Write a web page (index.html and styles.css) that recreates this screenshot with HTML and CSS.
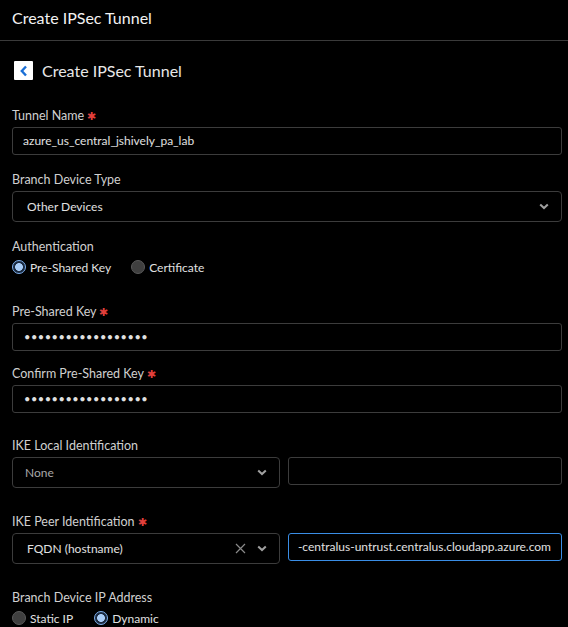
FILE: index.html
```html
<!DOCTYPE html>
<html>
<head>
<meta charset="utf-8">
<link rel="stylesheet" href="styles.css">
</head>
<body>
<div class="header">Create IPSec Tunnel</div>
<div class="titlebar">
  <span class="back"><svg width="10" height="12" viewBox="0 0 10 12"><path d="M7 1.5 L2.8 6 L7 10.5" fill="none" stroke="#1a6fd6" stroke-width="2.4"/></svg></span>
  <span class="title">Create IPSec Tunnel</span>
</div>
<div class="form">
  <div class="field f-tunnel">
    <div class="label">Tunnel Name <span class="req">✱</span></div>
    <div class="input">azure_us_central_jshively_pa_lab</div>
  </div>
  <div class="field f-gap1">
    <div class="label">Branch Device Type</div>
    <div class="select"><span class="val">Other Devices</span><span class="chev"><svg width="10" height="7" viewBox="0 0 10 7"><path d="M1.2 1.4 L5 5 L8.8 1.4" fill="none" stroke="#a0a0a0" stroke-width="2"/></svg></span></div>
  </div>
  <div class="field f-gap2">
    <div class="label">Authentication</div>
    <div class="radios">
      <span class="radio on"></span><span class="rtext">Pre-Shared Key</span>
      <span class="radio off r2"></span><span class="rtext">Certificate</span>
    </div>
  </div>
  <div class="field f-psk">
    <div class="label">Pre-Shared Key <span class="req">✱</span></div>
    <div class="input dots">••••••••••••••••••</div>
  </div>
  <div class="field f-confirm">
    <div class="label">Confirm Pre-Shared Key <span class="req">✱</span></div>
    <div class="input dots">••••••••••••••••••</div>
  </div>
  <div class="field f-local">
    <div class="label">IKE Local Identification</div>
    <div class="pair">
      <div class="select"><span class="val dim">None</span><span class="chev"><svg width="10" height="7" viewBox="0 0 10 7"><path d="M1.2 1.4 L5 5 L8.8 1.4" fill="none" stroke="#a0a0a0" stroke-width="2"/></svg></span></div>
      <div class="input"></div>
    </div>
  </div>
  <div class="field f-peer">
    <div class="label">IKE Peer Identification <span class="req">✱</span></div>
    <div class="pair">
      <div class="select"><span class="val">FQDN (hostname)</span><span class="clear"><svg width="11" height="11" viewBox="0 0 11 11"><path d="M1 1 L10 10 M10 1 L1 10" stroke="#8a8a8a" stroke-width="1.2"/></svg></span><span class="chev"><svg width="10" height="7" viewBox="0 0 10 7"><path d="M1.2 1.4 L5 5 L8.8 1.4" fill="none" stroke="#a0a0a0" stroke-width="2"/></svg></span></div>
      <div class="input focus"><span>-centralus-untrust.centralus.cloudapp.azure.com</span></div>
    </div>
  </div>
  <div class="field f-ip">
    <div class="label">Branch Device IP Address</div>
    <div class="radios">
      <span class="radio off"></span><span class="rtext">Static IP</span>
      <span class="radio on r3"></span><span class="rtext">Dynamic</span>
    </div>
  </div>
</div>
</body>
</html>
```
FILE: styles.css
```css
html, body { margin: 0; padding: 0; background: #000; }
body {
  font-family: Lato, "Open Sans", sans-serif;
  color: #e6e6e6;
  width: 568px;
  height: 627px;
  overflow: hidden;
}
.header {
  height: 41px;
  box-sizing: border-box;
  border-bottom: 1px solid #3a3a3a;
  padding: 8px 12px 0;
  font-size: 16px;
  line-height: 20px;
  color: #f2f2f2;
}
.titlebar {
  display: flex;
  align-items: center;
  padding: 20px 14px 0;
  height: 19px;
}
.back {
  width: 19px;
  height: 19px;
  background: #fff;
  border-radius: 1px;
  display: flex;
  align-items: center;
  justify-content: center;
}
.title {
  margin-left: 9px;
  font-size: 16px;
  color: #e8e8e8;
}
.form {
  padding: 0 6px 0 12px;
}
.field { display: flex; flex-direction: column; }
.f-tunnel { margin-top: 28px; }
.f-gap1 { margin-top: 17px; }
.f-gap2 { margin-top: 17px; }
.f-psk { margin-top: 29px; }
.f-confirm { margin-top: 15px; }
.f-local { margin-top: 25px; }
.f-peer { margin-top: 26px; }
.f-ip { margin-top: 26px; }
.label {
  font-size: 12.5px;
  line-height: 16px;
  color: #d0d0d0;
  margin-bottom: 3px;
}
.req { color: #e0403c; font-size: 11px; }
.input {
  height: 28px;
  box-sizing: border-box;
  border: 1px solid #3c3c3c;
  border-radius: 3px;
  padding: 0 10px;
  font-size: 12px;
  line-height: 26px;
  color: #e0e0e0;
  white-space: nowrap;
  overflow: hidden;
}
.input.dots { font-size: 11px; letter-spacing: 0.52px; padding-left: 11px; }
.input.focus {
  border-color: #3a8ee6;
  display: flex;
  justify-content: flex-end;
  font-size: 12px;
}
.input.focus span { flex: none; }
.select {
  height: 31px;
  box-sizing: border-box;
  border: 1px solid #3c3c3c;
  border-radius: 4px;
  display: flex;
  align-items: center;
  padding: 0 12px 0 14px;
  font-size: 12px;
  color: #e0e0e0;
}
.select .val { flex: 1; }
.select .val.dim { color: #a8a8a8; margin-left: -2px; }
.chev { display: flex; }
.clear { display: flex; margin-right: 11px; }
.pair {
  display: grid;
  grid-template-columns: 268px 1fr;
  gap: 8px;
  align-items: start;
}
.radios {
  display: flex;
  align-items: center;
  height: 16px;
  margin-top: 1px;
  font-size: 12px;
  color: #e0e0e0;
}
.radio {
  width: 14px;
  height: 14px;
  box-sizing: border-box;
  border-radius: 50%;
  margin-right: 4px;
}
.radio.on {
  border: 1.5px solid #7fb2f0;
  background: radial-gradient(circle, #a9cdf7 0 3.6px, #1a2a40 4.2px);
}
.radio.off {
  background: #3f3f3f;
  border: 1px solid #5a5a5a;
}
.r2 { margin-left: 20px; }
.r3 { margin-left: 21px; }
```
